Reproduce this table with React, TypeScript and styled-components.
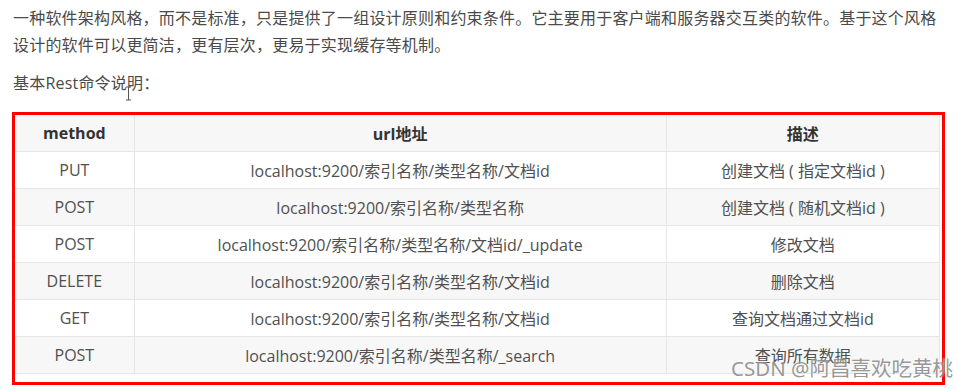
import React from "react";
import styled, { createGlobalStyle } from "styled-components";

const Global = createGlobalStyle`
  html, body { margin: 0; padding: 0; background: #fff; }
  body {
    font-family: "Open Sans", "Noto Sans CJK SC", sans-serif;
    color: #4a4a4a;
  }
`;

const Page = styled.div`
  position: relative;
  width: 958px;
  height: 389px;
  overflow: hidden;
  padding: 5px 13px 0 12px;
  box-sizing: border-box;
`;

const Para = styled.p<{ $mt?: number }>`
  margin: ${(p) => p.$mt ?? 0}px 0 0 1px;
  font-size: 16px;
  line-height: 27px;
  letter-spacing: 0.2px;
  white-space: nowrap;
`;

const Frame = styled.div`
  margin-top: 15px;
  width: 933px;
  height: 273px;
  border: 3px solid #ff0000;
  box-sizing: border-box;
  background: #fff;
`;

const Table = styled.table`
  border-collapse: collapse;
  width: 925px;
  font-size: 16px;
  color: #505050;
`;

const Row = styled.tr<{ $alt?: boolean }>`
  height: 37px;
  background: ${(p) => (p.$alt ? "#f7f7f7" : "#ffffff")};
  border-bottom: 1px solid #e6e6e6;
`;

const HeadRow = styled(Row)`
  height: 36px;
`;

const Th = styled.th<{ $w: number }>`
  width: ${(p) => p.$w}px;
  padding: 0;
  text-align: center;
  font-weight: 700;
  color: #333;
  border-left: 1px solid #e6e6e6;
  border-right: 1px solid #e6e6e6;
  &:first-child { border-left: none; }
`;

const Td = styled.td`
  padding: 0;
  text-align: center;
  white-space: nowrap;
  border-left: 1px solid #e6e6e6;
  border-right: 1px solid #e6e6e6;
  &:first-child { border-left: none; }
`;

const Cursor = styled.svg`
  position: absolute;
  left: 125px;
  top: 86px;
`;

const Watermark = styled.div`
  position: absolute;
  left: 731px;
  top: 354px;
  font-family: "Noto Sans", "Noto Sans CJK SC", sans-serif;
  font-size: 20.5px;
  line-height: 28px;
  color: rgba(125, 125, 125, 0.8);
  text-shadow: 0 0 2px rgba(255, 255, 255, 0.9);
  white-space: nowrap;
`;

const rows = [
  ["PUT", "localhost:9200/索引名称/类型名称/文档id", "创建文档 ( 指定文档id )"],
  ["POST", "localhost:9200/索引名称/类型名称", "创建文档 ( 随机文档id )"],
  ["POST", "localhost:9200/索引名称/类型名称/文档id/_update", "修改文档"],
  ["DELETE", "localhost:9200/索引名称/类型名称/文档id", "删除文档"],
  ["GET", "localhost:9200/索引名称/类型名称/文档id", "查询文档通过文档id"],
  ["POST", "localhost:9200/索引名称/类型名称/_search", "查询所有数据"],
];

export default function App() {
  return (
    <Page>
      <Global />
      <Para>
        一种软件架构风格，而不是标准，只是提供了一组设计原则和约束条件。它主要用于客户端和服务器交互类的软件。基于这个风格
      </Para>
      <Para>设计的软件可以更简洁，更有层次，更易于实现缓存等机制。</Para>
      <Para $mt={11}>基本Rest命令说明：</Para>
      <Frame>
        <Table>
          <thead>
            <HeadRow $alt>
              <Th $w={119}>method</Th>
              <Th $w={532}>url地址</Th>
              <Th $w={273}>描述</Th>
            </HeadRow>
          </thead>
          <tbody>
            {rows.map((r, i) => (
              <Row key={i} $alt={i % 2 === 1}>
                <Td>{r[0]}</Td>
                <Td>{r[1]}</Td>
                <Td>{r[2]}</Td>
              </Row>
            ))}
          </tbody>
        </Table>
      </Frame>
      <Cursor width="7" height="15" viewBox="0 0 7 15">
        <path d="M1 1h5M3.5 1v13M1 14h5" stroke="#555" strokeWidth="1" fill="none" />
      </Cursor>
      <Watermark>CSDN @阿昌喜欢吃黄桃</Watermark>
    </Page>
  );
}
